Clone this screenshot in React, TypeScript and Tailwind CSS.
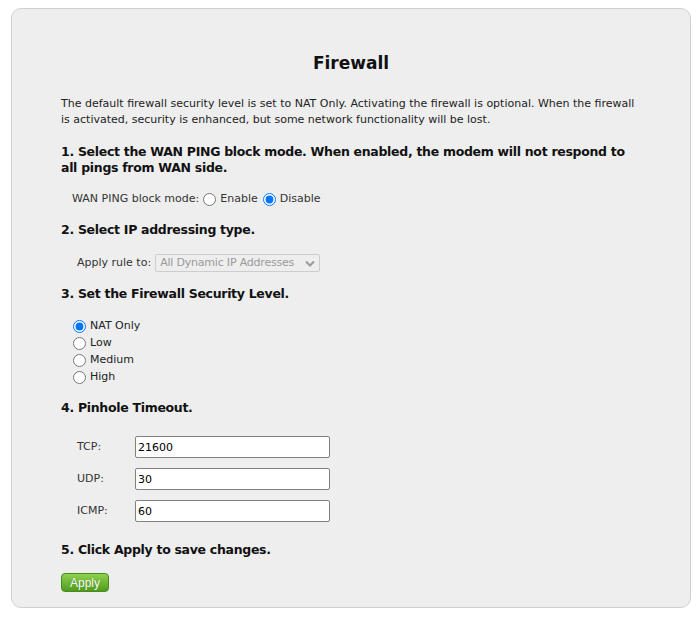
export default function App() {
  const levels = ['NAT Only', 'Low', 'Medium', 'High'];
  const timeouts = [
    { label: 'TCP:', value: '21600' },
    { label: 'UDP:', value: '30' },
    { label: 'ICMP:', value: '60' },
  ];

  const heading = "font-bold text-[12.5px] leading-[16px] tracking-[-0.3px] text-[#111] whitespace-nowrap";

  return (
    <div className="w-[698px] h-[620px] bg-white pt-[8px] pl-[11px] font-['DejaVu_Sans',Verdana,sans-serif] text-[11px] text-[#222]">
      <div className="w-[680px] h-[600px] rounded-[10px] border border-[#d0d0d0] bg-[#eeeeee] pt-[44px]">
        <h1 className="text-center font-bold text-[17px] leading-[20px] text-[#111]">
          Firewall
        </h1>

        <div className="pl-[49px]">
          <p className="mt-[23px] leading-[16px] whitespace-nowrap">
            The default firewall security level is set to NAT Only. Activating the firewall is optional. When the firewall
            <br />
            is activated, security is enhanced, but some network functionality will be lost.
          </p>

          {/* 1. WAN ping */}
          <h2 className={`mt-[16px] ${heading}`}>
            1. Select the WAN PING block mode. When enabled, the modem will not respond to
            <br />
            all pings from WAN side.
          </h2>
          <div className="mt-[13px] h-[20px] flex items-center pl-[11px] text-[#333]">
            <span>WAN PING block mode:</span>
            <input type="radio" name="ping" className="m-0 ml-[4px] w-[13px] h-[13px]" />
            <span className="ml-[4px]">Enable</span>
            <input type="radio" name="ping" defaultChecked className="m-0 ml-[5px] w-[13px] h-[13px]" />
            <span className="ml-[4px]">Disable</span>
          </div>

          {/* 2. IP type */}
          <h2 className={`mt-[13px] ${heading}`}>2. Select IP addressing type.</h2>
          <div className="mt-[16px] h-[18px] flex items-center pl-[16px] text-[#333]">
            <span>Apply rule to:</span>
            <div className="ml-[4px] w-[165px] h-[18px] border border-[#cdcdcd] rounded-[2px] flex items-center justify-between pl-[4px] pr-[4px] text-[#9a9a9a] tracking-[-0.2px]">
              <span>All Dynamic IP Addresses</span>
              <svg width="10" height="7" viewBox="0 0 10 7">
                <path d="M1 1.5 L5 5.5 L9 1.5" fill="none" stroke="#9a9a9a" strokeWidth="2" />
              </svg>
            </div>
          </div>

          {/* 3. Security level */}
          <h2 className={`mt-[14px] ${heading}`}>3. Set the Firewall Security Level.</h2>
          <div className="mt-[16px] pl-[12px] flex flex-col">
            {levels.map((level, index) => (
              <label key={level} className="h-[17px] flex items-center">
                <input
                  type="radio"
                  name="level"
                  defaultChecked={index === 0}
                  className="m-0 w-[13px] h-[13px]"
                />
                <span className="ml-[4px]">{level}</span>
              </label>
            ))}
          </div>

          {/* 4. Pinhole */}
          <h2 className={`mt-[14px] ${heading}`}>4. Pinhole Timeout.</h2>
          <div className="mt-[20px] flex flex-col gap-[10px]">
            {timeouts.map(row => (
              <div key={row.label} className="flex items-center h-[22px]">
                <span className="w-[74px] pl-[16px] text-[#333]">{row.label}</span>
                <input
                  type="text"
                  defaultValue={row.value}
                  className="w-[195px] h-[22px] border border-[#808080] rounded-[2px] bg-white px-[2px] text-[11px] text-black outline-none"
                />
              </div>
            ))}
          </div>

          {/* 5. Apply */}
          <h2 className={`mt-[20px] ${heading}`}>5. Click Apply to save changes.</h2>
          <button className="mt-[15px] w-[48px] h-[19px] rounded-[4px] border border-[#4a8a1e] bg-gradient-to-b from-[#8fd24f] to-[#4f9c1c] font-['Liberation_Sans',Arial,sans-serif] text-[12px] leading-none text-white [text-shadow:0_0_1px_#3a7010]">
            Apply
          </button>
        </div>
      </div>
    </div>
  );
}
